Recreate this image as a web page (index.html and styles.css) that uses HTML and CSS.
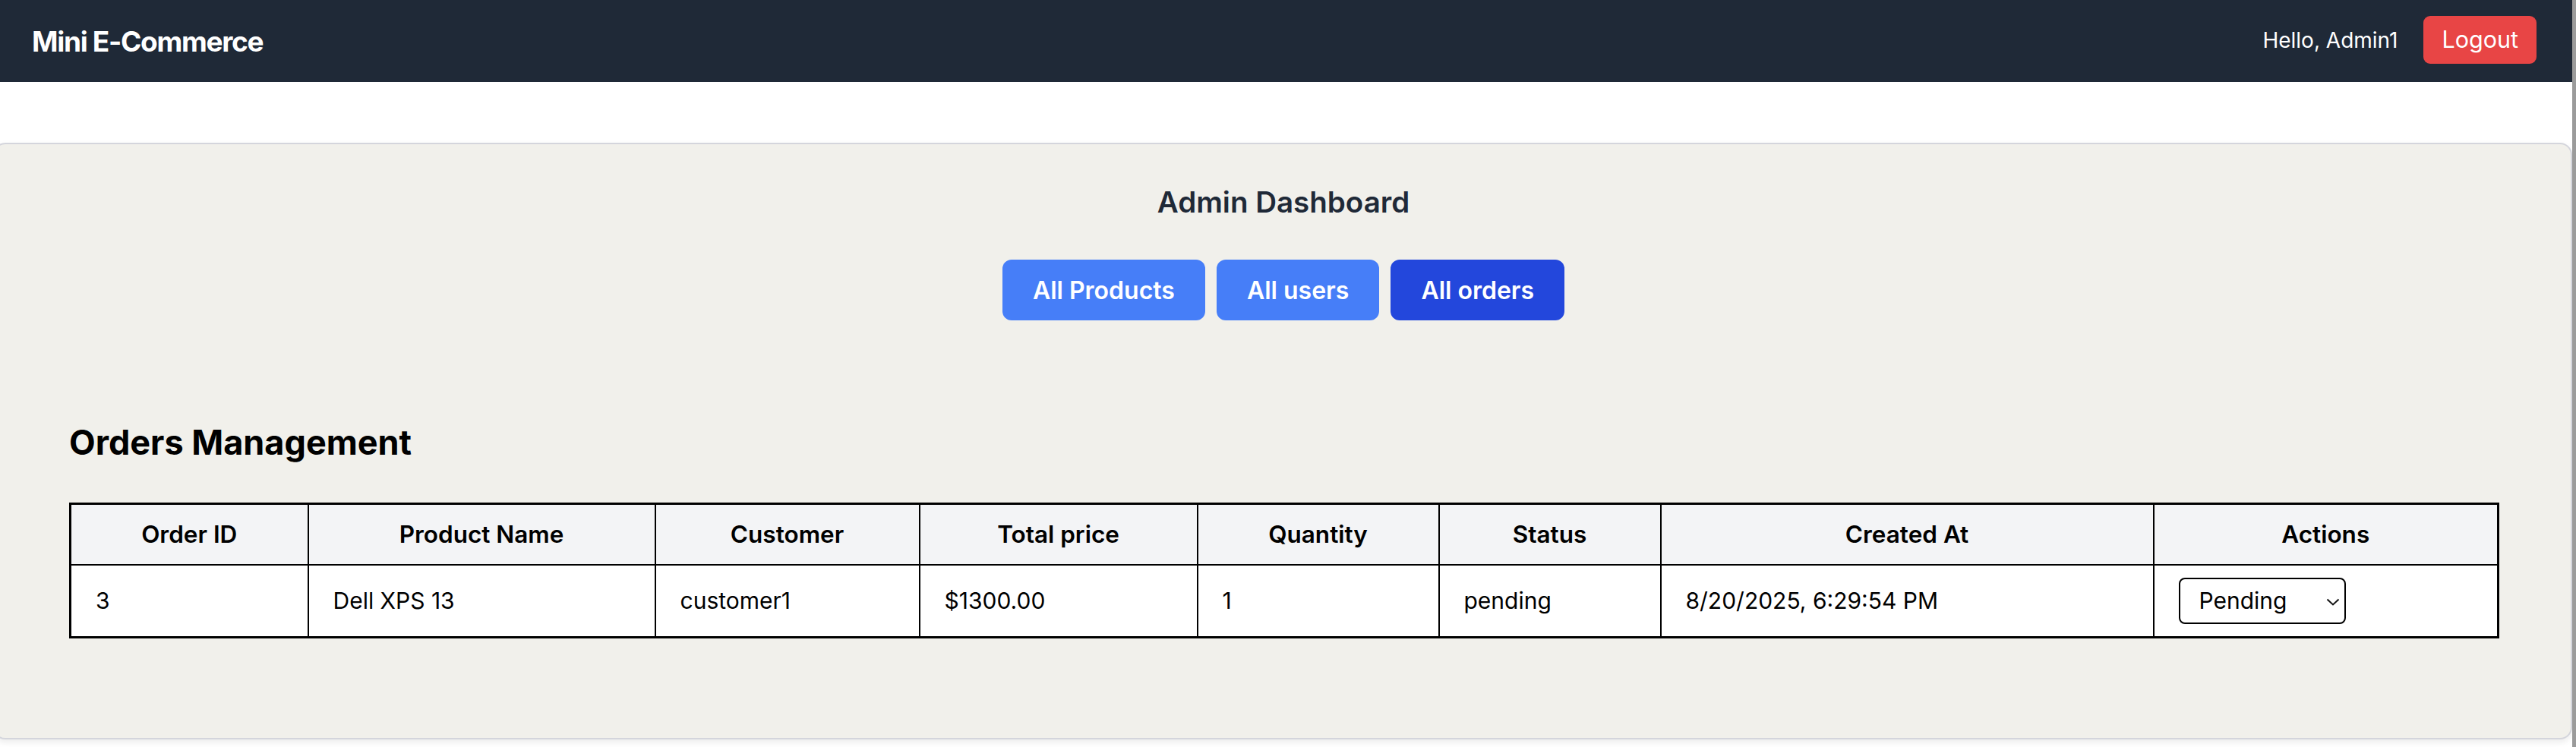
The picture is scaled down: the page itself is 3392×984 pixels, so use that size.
FILE: index.html
```html
<!DOCTYPE html>
<html lang="en">
<head>
<meta charset="utf-8">
<title>Mini E-Commerce</title>
<link rel="stylesheet" href="styles.css">
</head>
<body>
<nav class="navbar">
  <div class="brand">Mini E-Commerce</div>
  <div class="nav-right">
    <span class="greeting">Hello, Admin1</span>
    <button class="logout">Logout</button>
  </div>
</nav>
<main class="card">
  <h1 class="dash-title">Admin Dashboard</h1>
  <div class="tabs">
    <button class="tab">All Products</button>
    <button class="tab">All users</button>
    <button class="tab tab-active">All orders</button>
  </div>
  <h2 class="section-title">Orders Management</h2>
  <table class="orders">
    <thead>
      <tr>
        <th class="c-id">Order ID</th>
        <th class="c-name">Product Name</th>
        <th class="c-cust">Customer</th>
        <th class="c-price">Total price</th>
        <th class="c-qty">Quantity</th>
        <th class="c-status">Status</th>
        <th class="c-date">Created At</th>
        <th class="c-act">Actions</th>
      </tr>
    </thead>
    <tbody>
      <tr>
        <td>3</td>
        <td>Dell XPS 13</td>
        <td>customer1</td>
        <td>$1300.00</td>
        <td>1</td>
        <td>pending</td>
        <td>8/20/2025, 6:29:54 PM</td>
        <td>
          <div class="select-wrap">
            <select class="status-select">
              <option>Pending</option>
              <option>Shipped</option>
              <option>Delivered</option>
            </select>
            <svg class="chev" width="18" height="10" viewBox="0 0 18 10"><path d="M1.5 1.5 L9 8.5 L16.5 1.5" fill="none" stroke="#111" stroke-width="2"/></svg>
          </div>
        </td>
      </tr>
    </tbody>
  </table>
</main>
</body>
</html>
```
FILE: styles.css
```css
html, body {
  margin: 0;
  padding: 0;
}
body {
  font-family: Inter, "Noto Sans", "Liberation Sans", sans-serif;
  background: #ffffff;
  border-right: 5px solid #9b9b9b;
  min-height: 100vh;
  box-sizing: border-box;
  overflow: hidden;
  color: #000;
}
.navbar {
  height: 108px;
  background: #1f2937;
  display: flex;
  align-items: center;
  justify-content: space-between;
  padding: 0 47px 0 42px;
  box-sizing: border-box;
}
.brand {
  color: #fff;
  font-weight: 700;
  font-size: 37px;
  letter-spacing: -1.3px;
  line-height: 1;
  margin-top: 0;
}
.nav-right {
  display: flex;
  align-items: center;
  gap: 34px;
  margin-top: -3px;
}
.greeting {
  color: #fff;
  font-size: 28px;
}
.logout {
  background: #e84545;
  color: #fff;
  border: none;
  border-radius: 9px;
  font-family: inherit;
  font-size: 30.5px;
  height: 63px;
  padding: 0 24px;
  line-height: 1;
}
.card {
  margin: 80px 0 0 -9px;
  background: #f1f0eb;
  border: 2px solid #d4d5dc;
  border-radius: 16px;
  box-shadow: 0 4px 8px rgba(0, 0, 0, 0.08);
  padding: 48px 96px 131px 98px;
  box-sizing: border-box;
}
.dash-title {
  margin: 0;
  text-align: center;
  font-size: 38.5px;
  line-height: 56px;
  font-weight: 600;
  color: #1f2937;
}
.tabs {
  display: flex;
  justify-content: center;
  gap: 15px;
  margin-top: 48px;
}
.tab {
  height: 80px;
  padding: 0 40px;
  border: none;
  border-radius: 12px;
  background: #467ef8;
  color: #fff;
  font-family: inherit;
  font-size: 32px;
  font-weight: 600;
}
.tab-active {
  background: #2347dc;
}
.section-title {
  margin: 131px 0 0 0;
  font-size: 45px;
  line-height: 60px;
  font-weight: 700;
  color: #000;
}
.orders {
  margin-top: 49px;
  width: 3197px;
  border-collapse: collapse;
  table-layout: fixed;
  border: 3px solid #000;
  background: #fff;
}
.orders th, .orders td {
  border: 2px solid #000;
  padding: 0 32px;
  box-sizing: border-box;
}
.orders th {
  height: 80px;
  background: #f3f4f6;
  font-size: 31.5px;
  font-weight: 600;
  text-align: center;
}
.orders td {
  height: 96px;
  font-size: 30px;
  text-align: left;
  font-weight: 400;
}
.c-id { width: 313px; }
.c-name { width: 457px; }
.c-cust { width: 348px; }
.c-price { width: 366px; }
.c-qty { width: 318px; }
.c-status { width: 292px; }
.c-date { width: 649px; }
.c-act { width: 454px; }
.select-wrap {
  position: relative;
  width: 220px;
  height: 61px;
}
.status-select {
  appearance: none;
  -webkit-appearance: none;
  width: 220px;
  height: 61px;
  border: 2px solid #000;
  border-radius: 8px;
  background: #fff;
  font-family: inherit;
  font-size: 30px;
  color: #000;
  padding: 0 0 0 25px;
  box-sizing: border-box;
}
.chev {
  position: absolute;
  left: 194px;
  top: 27px;
  pointer-events: none;
}
```
